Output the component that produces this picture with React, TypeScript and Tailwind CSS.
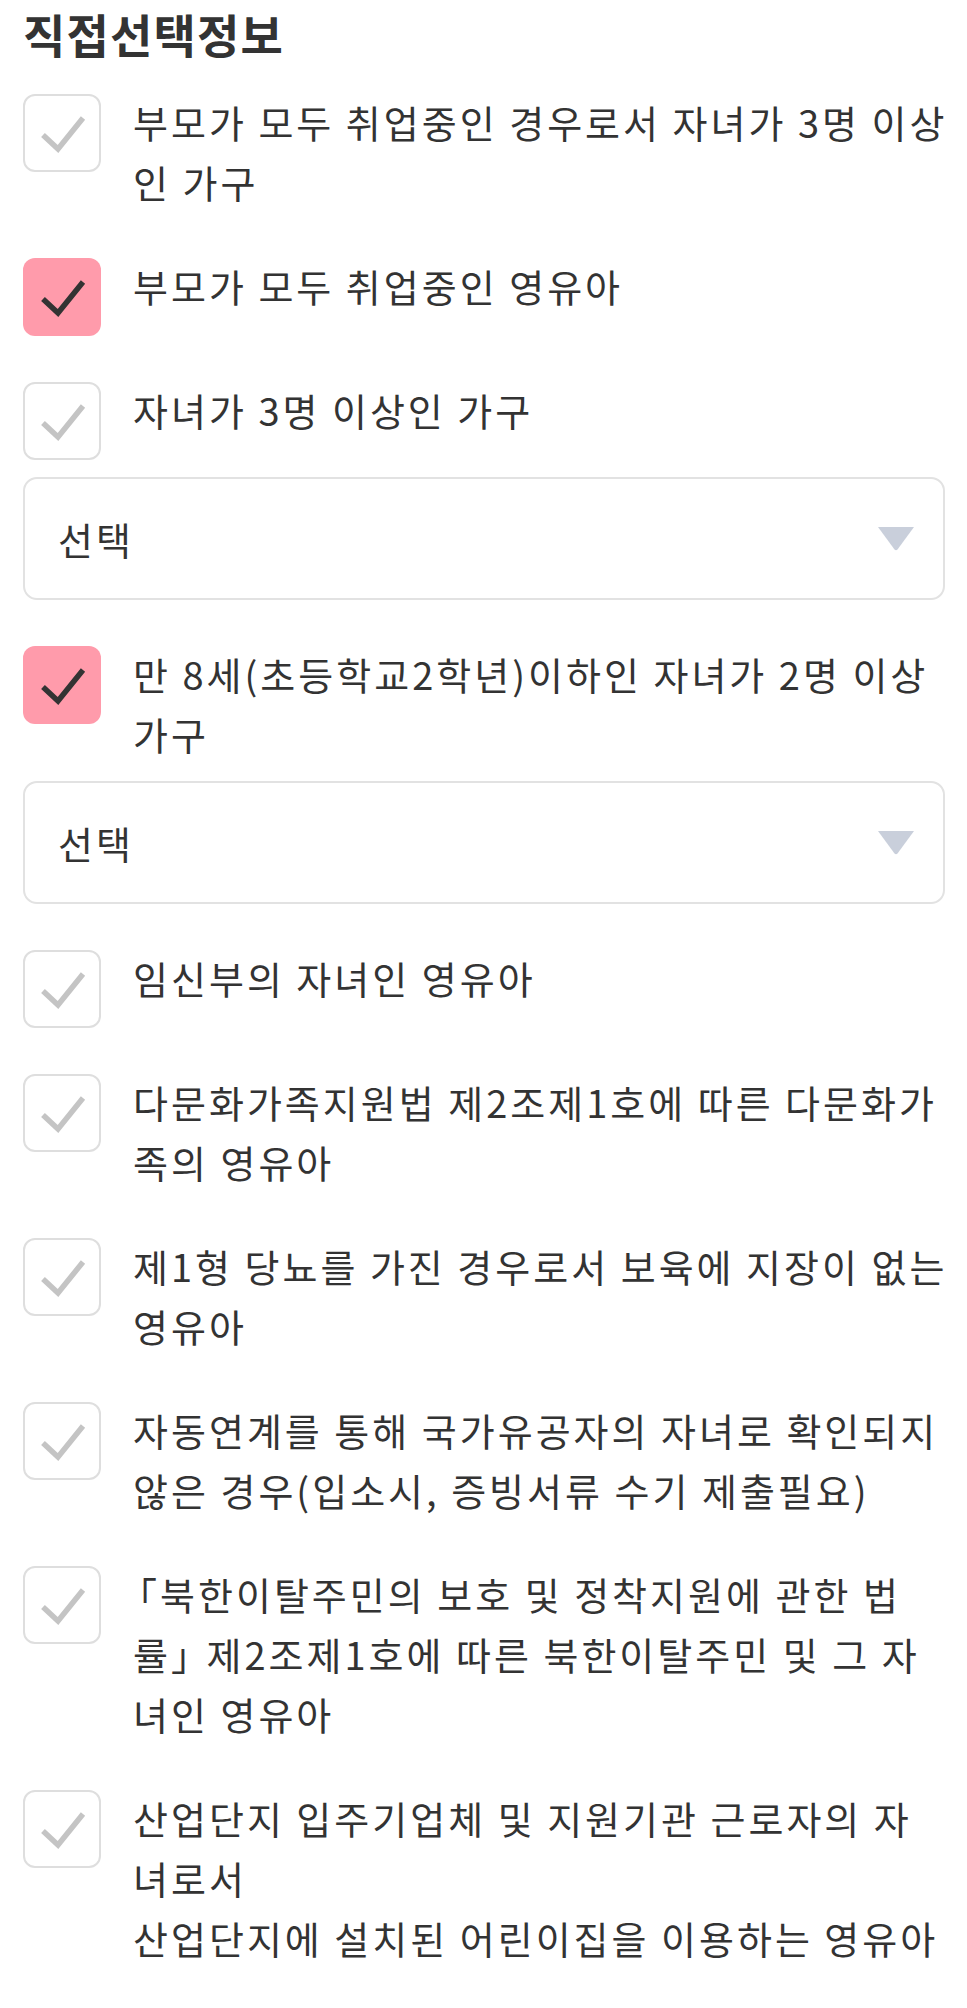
import type { ReactNode } from 'react'

const items: { id: number; checked: boolean; lines: ReactNode[]; select?: boolean }[] = [
  {
    id: 1,
    checked: false,
    lines: ['부모가 모두 취업중인 경우로서 자녀가 3명 이상', '인 가구'],
  },
  { id: 2, checked: true, lines: ['부모가 모두 취업중인 영유아'] },
  { id: 3, checked: false, lines: ['자녀가 3명 이상인 가구'], select: true },
  {
    id: 4,
    checked: true,
    lines: ['만 8세(초등학교2학년)이하인 자녀가 2명 이상', '가구'],
    select: true,
  },
  { id: 5, checked: false, lines: ['임신부의 자녀인 영유아'] },
  {
    id: 6,
    checked: false,
    lines: ['다문화가족지원법 제2조제1호에 따른 다문화가', '족의 영유아'],
  },
  {
    id: 7,
    checked: false,
    lines: ['제1형 당뇨를 가진 경우로서 보육에 지장이 없는', '영유아'],
  },
  {
    id: 8,
    checked: false,
    lines: ['자동연계를 통해 국가유공자의 자녀로 확인되지', '않은 경우(입소시, 증빙서류 수기 제출필요)'],
  },
  {
    id: 9,
    checked: false,
    lines: [
      <>
        <span className="-ml-[14px]">「</span>북한이탈주민의 보호 및 정착지원에 관한 법
      </>,
      <>
        률<span className="tracking-[-14px]">」</span> 제2조제1호에 따른 북한이탈주민 및 그 자
      </>,
      '녀인 영유아',
    ],
  },
  {
    id: 10,
    checked: false,
    lines: [
      '산업단지 입주기업체 및 지원기관 근로자의 자',
      '녀로서',
      '산업단지에 설치된 어린이집을 이용하는 영유아',
    ],
  },
]

const CheckBox = ({ checked }: { checked: boolean }) => (
  <div
    className={
      checked
        ? 'mt-[2px] w-[78px] h-[78px] shrink-0 rounded-[12px] bg-[#ff9bab] flex items-center justify-center'
        : 'mt-[2px] w-[78px] h-[78px] shrink-0 rounded-[12px] border-2 border-[#dedede] bg-white flex items-center justify-center'
    }
  >
    <svg width="78" height="78" viewBox="0 0 78 78" className="shrink-0">
      <path
        d="M20 41 L35 55 L60 24"
        fill="none"
        stroke={checked ? '#333333' : '#c4c4c4'}
        strokeWidth="5.5"
        strokeLinejoin="miter"
      />
    </svg>
  </div>
)

const SelectMock = () => (
  <div className="h-[123px] border-2 border-[#e2e2e2] rounded-[14px] bg-white flex items-center justify-between pl-[33px] pr-[29px]">
    <span className="text-[38px] leading-[60px] tracking-[3px] text-[#333]">선택</span>
    <svg width="36" height="24" viewBox="0 0 36 24">
      <path d="M0 0 H36 L19.5 22.5 Q18 24 16.5 22.5 Z" fill="#c9cfdb" />
    </svg>
  </div>
)

const App = () => {
  return (
    <div
      className="bg-white min-h-[2008px] pt-[3px] pl-[23px] pr-[22px] text-[#333]"
      style={{ fontFamily: '"Noto Sans CJK KR", "Noto Sans", sans-serif' }}
    >
      <h2 className="text-[46px] leading-[60px] font-bold tracking-[1.2px] mb-[29px]">직접선택정보</h2>

      <div className="flex flex-col gap-[44px]">
        {items.map((item) => (
          <div key={item.id} className="flex flex-col gap-[17px]">
            <div className="flex items-start gap-[32px]">
              <CheckBox checked={item.checked} />
              <div className="text-[38px] leading-[60px] tracking-[3px]">
                {item.lines.map((line, i) => (
                  <div key={i} className="whitespace-nowrap">
                    {line}
                  </div>
                ))}
              </div>
            </div>
            {item.select && <SelectMock />}
          </div>
        ))}
      </div>
    </div>
  )
}

export default App
